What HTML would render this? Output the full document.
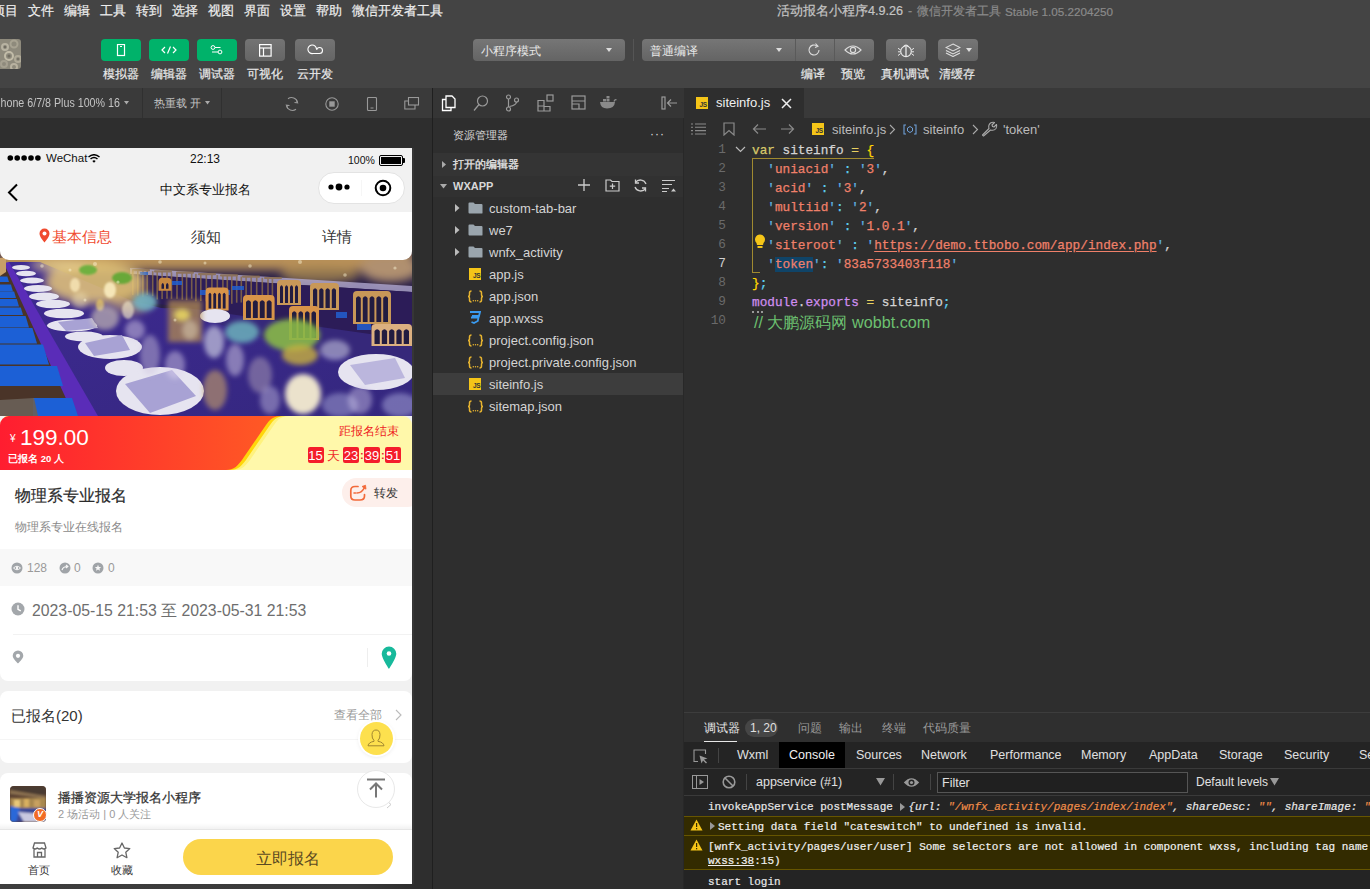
<!DOCTYPE html>
<html><head><meta charset="utf-8">
<style>
*{box-sizing:border-box;margin:0;padding:0}
html,body{width:1370px;height:889px;overflow:hidden}
body{position:relative;background:#444;font-family:"Liberation Sans",sans-serif;color:#ddd;font-size:13px}
.a{position:absolute}
.t{position:absolute;white-space:nowrap;line-height:1}
/* top */
#menu .t{top:5px;font-size:12.5px;color:#eeeeee;-webkit-text-stroke:0.2px currentColor}
.btn{position:absolute;top:39px;width:40px;height:22px;border-radius:4px;background:#00b26a}
.btn.g{background:linear-gradient(#747474,#656565)}
.lbl{position:absolute;top:67.5px;font-size:12px;color:#e8e8e8;-webkit-text-stroke:0.2px currentColor;white-space:nowrap;line-height:1}
.dd{position:absolute;top:39px;height:22px;border-radius:4px;background:linear-gradient(#767676,#646464)}
/* sim */
#simbar{left:0;top:88px;width:432px;height:30px;background:#3a3a3a}
#sim{left:0;top:118px;width:432px;height:771px;background:#2e2e2e}
#phone{left:0;top:148px;width:412px;height:736px;background:#f1f1f1;overflow:hidden}
#divL{left:432px;top:88px;width:1px;height:801px;background:#1f1f1f}
/* explorer */
#exp{left:433px;top:88px;width:251px;height:801px;background:#2e2e2e}
#expbar{left:0;top:0;width:251px;height:30px;background:#353535}
.row{position:absolute;left:0;width:250px;height:22px}
.row .t{top:5px;font-size:13px;color:#d0d0d0}
/* editor */
#ed{left:684px;top:88px;width:686px;height:624px;background:#2e2e2e}
#tabbar{left:0;top:0;width:686px;height:30px;background:#393939}
.code{position:absolute;left:68px;margin-top:0.5px;-webkit-text-stroke:0.25px currentColor;font-family:"Liberation Mono",monospace;font-size:12.73px;line-height:19px;white-space:pre;color:#d4d4d4}
.ln{position:absolute;width:42px;text-align:right;font-family:"Liberation Mono",monospace;font-size:12.73px;line-height:19px;color:#6e6e6e}
/* debug */
#dbg{left:684px;top:712px;width:686px;height:177px;background:#242424}
</style></head>
<body>
<div id="menu" class="a" style="left:0;top:0;width:1370px;height:22px"><div class="t" style="left:-8.3px">项目</div><div class="t" style="left:27.7px">文件</div><div class="t" style="left:63.8px">编辑</div><div class="t" style="left:100.4px">工具</div><div class="t" style="left:136px">转到</div><div class="t" style="left:172px">选择</div><div class="t" style="left:207.8px">视图</div><div class="t" style="left:244.3px">界面</div><div class="t" style="left:280px">设置</div><div class="t" style="left:316px">帮助</div><div class="t" style="left:352px">微信开发者工具</div><div class="t" style="left:777px;top:5px;font-size:12.6px;color:#c4c4c4">活动报名小程序4.9.26</div><div class="t" style="left:908px;top:5px;font-size:12.4px;color:#8a8a8a">-</div><div class="t" style="left:917px;top:5px;font-size:12.2px;color:#8a8a8a">微信开发者工具</div><div class="t" style="left:1005px;top:5.5px;font-size:11.7px;color:#8a8a8a">Stable 1.05.2204250</div></div>
<div class="a" style="left:0;top:39px;width:21px;height:30px;border-radius:0 3px 3px 0;overflow:hidden;background:#8e8a7c"><svg width="21" height="30"><defs><filter id="avb"><feGaussianBlur stdDeviation="0.7"/></filter></defs><g filter="url(#avb)" fill="none" stroke-width="2"><circle cx="5" cy="8" r="3" stroke="#b8b3a2"/><circle cx="14" cy="5" r="3.5" stroke="#a8a392"/><circle cx="9" cy="17" r="4" stroke="#c2bca8"/><circle cx="18" cy="20" r="3" stroke="#b0aa98"/><circle cx="4" cy="25" r="3" stroke="#a5a090"/><circle cx="14" cy="28" r="3" stroke="#b8b2a0"/></g><g fill="#5e5a50" opacity="0.6"><circle cx="5" cy="8" r="1.2"/><circle cx="9" cy="17" r="1.5"/><circle cx="18" cy="20" r="1"/></g></svg></div>
<div class="btn" style="left:101px"><svg class="a" style="left:14px;top:5px" width="12" height="13"><rect x="2.5" y="0.5" width="7" height="11" stroke="#fff" fill="none" stroke-width="1.2"/><line x1="5" y1="2.5" x2="7" y2="2.5" stroke="#fff" fill="none" stroke-width="1.2"/></svg></div>
<div class="btn" style="left:149px"><svg class="a" style="left:12px;top:6px" width="16" height="10"><path d="M4 2 L1 5 L4 8 M12 2 L15 5 L12 8 M9.5 1.5 L6.5 8.5" stroke="#fff" fill="none" stroke-width="1.2"/></svg></div>
<div class="btn" style="left:197px"><svg class="a" style="left:12px;top:5px" width="16" height="12"><circle cx="4" cy="3.5" r="1.9" stroke="#fff" fill="none" stroke-width="1"/><line x1="6" y1="3.5" x2="11.5" y2="3.5" stroke="#fff" stroke-width="1"/><circle cx="11" cy="8" r="1.9" stroke="#fff" fill="none" stroke-width="1"/><line x1="3" y1="8" x2="9" y2="8" stroke="#fff" stroke-width="1"/></svg></div>
<div class="btn g" style="left:245px"><svg class="a" style="left:14px;top:5px" width="13" height="13"><rect x="0.6" y="0.6" width="11.5" height="11.5" stroke="#fff" fill="none" stroke-width="1.2"/><line x1="0.6" y1="4" x2="12" y2="4" stroke="#fff" fill="none" stroke-width="1.2"/><line x1="4.5" y1="4" x2="4.5" y2="12" stroke="#fff" fill="none" stroke-width="1.2"/></svg></div>
<div class="btn g" style="left:295px"><svg class="a" style="left:12px;top:4px" width="17" height="14"><path d="M9.5 6.2 A4.3 4.3 0 1 0 6 10.5 L12.5 10.5 A3 3 0 0 0 12.5 4.5 A3 3 0 0 0 9.6 6.8" stroke="#fff" fill="none" stroke-width="1.1"/></svg></div>
<div class="lbl" style="left:103px">模拟器</div>
<div class="lbl" style="left:151px">编辑器</div>
<div class="lbl" style="left:199px">调试器</div>
<div class="lbl" style="left:247px">可视化</div>
<div class="lbl" style="left:297px">云开发</div>
<div class="dd" style="left:473px;width:152px"><div class="t" style="left:8px;top:6.5px;font-size:11.8px;color:#e8e8e8">小程序模式</div><svg class="a" style="left:133px;top:9px" width="6" height="4"><path d="M0 0 L6 0 L3 4Z" fill="#ddd"/></svg></div>
<div class="a" style="left:633px;top:39px;width:1px;height:22px;background:#555"></div>
<div class="dd" style="left:642px;width:232px"><div class="t" style="left:8px;top:6.5px;font-size:11.8px;color:#e8e8e8">普通编译</div><svg class="a" style="left:134px;top:9px" width="6" height="4"><path d="M0 0 L6 0 L3 4Z" fill="#ddd"/></svg>
<div class="a" style="left:153px;top:0;width:1px;height:22px;background:#5a5a5a"></div><div class="a" style="left:192px;top:0;width:1px;height:22px;background:#5a5a5a"></div>
<svg class="a" style="left:164px;top:3px" width="16" height="16"><path d="M13 8 A5 5 0 1 1 11 4" stroke="#ddd" fill="none" stroke-width="1.1"/><path d="M9.5 1.5 L12 4.2 L9 5.5" stroke="#ddd" fill="none" stroke-width="1.1"/></svg>
<svg class="a" style="left:202px;top:5px" width="18" height="12"><path d="M1 6 Q9 -2 17 6 Q9 14 1 6Z" stroke="#ddd" fill="none" stroke-width="1.1"/><circle cx="9" cy="6" r="2.6" stroke="#ddd" fill="none" stroke-width="1.1"/></svg></div>
<div class="dd" style="left:886px;width:40px"><svg class="a" style="left:11px;top:3px" width="18" height="16"><circle cx="9" cy="9.3" r="5.3" stroke="#e8e8e8" fill="none" stroke-width="1.1"/><path d="M6.3 4.8 Q9 1.5 11.7 4.8" stroke="#e8e8e8" fill="none" stroke-width="1.1"/><path d="M9 4.5 L9 14.6" stroke="#e8e8e8" stroke-width="1.3"/><path d="M3.7 8 L1 6.3 M14.3 8 L17 6.3 M3.7 11.5 L1 13.5 M14.3 11.5 L17 13.5 M3.7 9.8 L1 9.8 M14.3 9.8 L17 9.8" stroke="#e8e8e8" fill="none" stroke-width="1"/></svg></div>
<div class="dd" style="left:938px;width:40px"><svg class="a" style="left:7px;top:4px" width="16" height="14"><path d="M8 1 L15 4.5 L8 8 L1 4.5Z M1 7.5 L8 11 L15 7.5 M1 10 L8 13.5 L15 10" stroke="#ddd" fill="none" stroke-width="1.1"/></svg><svg class="a" style="left:28px;top:9px" width="6" height="4"><path d="M0 0 L6 0 L3 4Z" fill="#ddd"/></svg></div>
<div class="lbl" style="left:801px">编译</div>
<div class="lbl" style="left:841px">预览</div>
<div class="lbl" style="left:881px">真机调试</div>
<div class="lbl" style="left:939px">清缓存</div>

<div id="simbar" class="a">
<div class="t" style="left:-9.5px;top:9px;font-size:12px;color:#c4c4c4;transform:scaleX(0.89);transform-origin:0 0">iPhone 6/7/8 Plus 100% 16</div>
<svg class="a" style="left:124px;top:13px" width="5" height="4"><path d="M0 0 L5 0 L2.5 3.5Z" fill="#aaa"/></svg>
<div class="a" style="left:142px;top:0;width:1px;height:30px;background:#303030"></div>
<div class="t" style="left:154px;top:9.5px;font-size:11.3px;color:#c4c4c4">热重载 开</div>
<svg class="a" style="left:205px;top:13px" width="5" height="4"><path d="M0 0 L5 0 L2.5 3.5Z" fill="#aaa"/></svg>
<div class="a" style="left:221px;top:0;width:1px;height:30px;background:#303030"></div>
<svg class="a" style="left:284px;top:8px" width="16" height="16"><path d="M13.5 6.5 A6 6 0 0 0 4 2.8 M2.5 9.5 A6 6 0 0 0 12 13.2" stroke="#999" fill="none" stroke-width="1.1"/><path d="M12.2 3.5 L13.6 6.8 L10.5 6.5 M3.8 12.5 L2.4 9.2 L5.5 9.5" stroke="#999" fill="none" stroke-width="1.1"/></svg>
<svg class="a" style="left:325px;top:9px" width="14" height="14"><circle cx="7" cy="7" r="6.2" stroke="#999" fill="none" stroke-width="1.1"/><rect x="4.3" y="4.3" width="5.4" height="5.4" fill="#999"/></svg>
<svg class="a" style="left:366px;top:9px" width="12" height="15"><rect x="1.5" y="0.5" width="9" height="13" rx="1" stroke="#999" fill="none" stroke-width="1.1"/><line x1="4.5" y1="11" x2="7.5" y2="11" stroke="#999" stroke-width="1"/></svg>
<svg class="a" style="left:404px;top:9px" width="16" height="14"><rect x="4.5" y="0.5" width="10" height="7.5" stroke="#999" fill="none" stroke-width="1.1"/><path d="M4.5 4 L0.8 4 L0.8 12 L11 12 L11 8" stroke="#999" fill="none" stroke-width="1.1"/></svg>
</div>
<div id="sim" class="a">
</div>
<div id="phone" class="a">
<!-- status -->
<svg class="a" style="left:7px;top:6px" width="36" height="8"><g fill="#000"><circle cx="3.3" cy="4" r="2.8"/><circle cx="10.2" cy="4" r="2.8"/><circle cx="17.1" cy="4" r="2.8"/><circle cx="24" cy="4" r="2.8"/><circle cx="30.9" cy="4" r="2.8"/></g></svg>
<div class="t" style="left:46px;top:5px;font-size:11.5px;color:#111">WeChat</div>
<svg class="a" style="left:88px;top:6px" width="12" height="9"><path d="M0.5 3 Q6 -1.5 11.5 3" stroke="#000" fill="none" stroke-width="1.5"/><path d="M2.5 5 Q6 2 9.5 5" stroke="#000" fill="none" stroke-width="1.5"/><path d="M4.3 7 Q6 5.5 7.7 7 L6 8.8Z" fill="#000"/></svg>
<div class="t" style="left:190px;top:5px;font-size:12px;color:#111">22:13</div>
<div class="t" style="left:348px;top:7px;font-size:10.5px;color:#111">100%</div>
<div class="a" style="left:379px;top:7px;width:24px;height:11px;border:1.5px solid #000;border-radius:2px;padding:1px"><div style="width:100%;height:100%;background:#000"></div></div>
<div class="a" style="left:403px;top:10px;width:2px;height:5px;background:#000;border-radius:0 1px 1px 0"></div>
<!-- nav -->
<svg class="a" style="left:7px;top:35px" width="12" height="20"><path d="M10 1.5 L2 9.5 L10 17.5" stroke="#000" fill="none" stroke-width="2"/></svg>
<div class="t" style="left:160px;top:35px;font-size:13px;color:#111">中文系专业报名</div>
<div class="a" style="left:318px;top:24px;width:87px;height:32px;border-radius:16px;background:#fff;border:1px solid #e3e3e3"></div>
<svg class="a" style="left:327px;top:34px" width="26" height="10"><circle cx="4" cy="5" r="2.6" fill="#000"/><circle cx="12" cy="5" r="3.4" fill="#000"/><circle cx="20" cy="5" r="2.6" fill="#000"/></svg>
<div class="a" style="left:361px;top:32px;width:1px;height:16px;background:#f6f6f6"></div>
<svg class="a" style="left:374px;top:31px" width="18" height="18"><circle cx="9" cy="9" r="7.3" stroke="#000" fill="none" stroke-width="2"/><circle cx="9" cy="9" r="3.3" fill="#000"/></svg>
<!-- tabs -->
<div class="a" style="left:0;top:64px;width:412px;height:48px;background:#fff;border-radius:0 0 9px 9px;z-index:2"></div>
<svg class="a" style="left:39px;top:80px;z-index:3" width="11" height="15"><path d="M5.5 0.5 A5 5 0 0 1 10.5 5.5 C10.5 9 5.5 14.5 5.5 14.5 C5.5 14.5 0.5 9 0.5 5.5 A5 5 0 0 1 5.5 0.5Z" fill="#f04a2e"/><circle cx="5.5" cy="5.5" r="2" fill="#fff"/></svg>
<div class="t" style="left:52px;top:81.5px;font-size:14.5px;color:#f04a2e;z-index:3">基本信息</div>
<div class="t" style="left:191px;top:82px;font-size:14.5px;color:#333;z-index:3">须知</div>
<div class="t" style="left:322px;top:82px;font-size:14.5px;color:#333;z-index:3">详情</div>
<svg class="a" style="left:0;top:100px;z-index:1" width="412" height="168" viewBox="0 248 412 168">
<defs>
<linearGradient id="ptab" x1="0" y1="0" x2="1" y2="1"><stop offset="0" stop-color="#3e2a92"/><stop offset="1" stop-color="#34277e"/></linearGradient>
<filter id="bl" x="-10%" y="-10%" width="120%" height="120%"><feGaussianBlur stdDeviation="0.7"/></filter>
<filter id="bl1" x="-10%" y="-10%" width="120%" height="120%"><feGaussianBlur stdDeviation="1.1"/></filter>
<filter id="bl2" x="-30%" y="-30%" width="160%" height="160%"><feGaussianBlur stdDeviation="2.5"/></filter>
<filter id="bl3" x="-30%" y="-30%" width="160%" height="160%"><feGaussianBlur stdDeviation="5"/></filter>
</defs>
<rect x="0" y="248" width="412" height="168" fill="#36287a"/>
<!-- far background -->
<rect x="0" y="248" width="412" height="60" fill="#2a2048"/>
<g filter="url(#bl3)">
<rect x="0" y="248" width="412" height="22" fill="#b89058"/>
<ellipse cx="390" cy="268" rx="30" ry="14" fill="#b09070"/>
<ellipse cx="320" cy="275" rx="40" ry="8" fill="#a88850" opacity="0.8"/>
</g>
<!-- far table lavender edge -->
<path d="M130 268 L412 286 L412 292 L130 274Z" fill="#b8b0d8" opacity="0.75" filter="url(#bl)"/>
<path d="M130 274 L412 292 L412 340 L130 300Z" fill="#2c1c58"/>
<g filter="url(#bl)" fill="#8a6c48" opacity="0.8"><rect x="132.0" y="270.0" width="1.6" height="25.0"/><rect x="137.0" y="270.3" width="1.6" height="25.5"/><rect x="142.1" y="270.6" width="1.6" height="26.5"/><rect x="146.4" y="270.9" width="1.6" height="24.1"/><rect x="151.9" y="271.2" width="1.6" height="25.0"/><rect x="156.4" y="271.5" width="1.6" height="28.0"/><rect x="161.3" y="271.8" width="1.6" height="27.3"/><rect x="166.2" y="272.1" width="1.6" height="26.6"/><rect x="170.7" y="272.3" width="1.6" height="26.5"/><rect x="176.2" y="272.7" width="1.6" height="26.1"/><rect x="181.5" y="273.0" width="1.6" height="26.7"/><rect x="185.8" y="273.2" width="1.6" height="27.0"/><rect x="190.9" y="273.5" width="1.6" height="25.2"/><rect x="195.1" y="273.8" width="1.6" height="27.5"/><rect x="200.0" y="274.1" width="1.6" height="26.9"/><rect x="205.5" y="274.4" width="1.6" height="26.9"/><rect x="211.1" y="274.7" width="1.6" height="25.6"/><rect x="216.5" y="275.1" width="1.6" height="25.8"/><rect x="222.1" y="275.4" width="1.6" height="27.5"/><rect x="226.5" y="275.7" width="1.6" height="24.5"/><rect x="231.0" y="275.9" width="1.6" height="27.9"/><rect x="235.9" y="276.2" width="1.6" height="26.5"/><rect x="240.5" y="276.5" width="1.6" height="26.0"/><rect x="245.3" y="276.8" width="1.6" height="25.4"/><rect x="250.4" y="277.1" width="1.6" height="26.3"/><rect x="255.9" y="277.4" width="1.6" height="26.7"/><rect x="261.5" y="277.8" width="1.6" height="27.4"/><rect x="267.2" y="278.1" width="1.6" height="26.7"/><rect x="271.6" y="278.4" width="1.6" height="27.4"/><rect x="132" y="269.0" width="18" height="2.2" rx="1"/><rect x="154" y="270.3" width="18" height="2.2" rx="1"/><rect x="176" y="271.6" width="18" height="2.2" rx="1"/><rect x="198" y="273.0" width="18" height="2.2" rx="1"/><rect x="220" y="274.3" width="18" height="2.2" rx="1"/><rect x="242" y="275.6" width="18" height="2.2" rx="1"/><rect x="264" y="276.9" width="18" height="2.2" rx="1"/></g>
<g fill="#2060d0" opacity="0.85" filter="url(#bl)"><rect x="140" y="272" width="8" height="3"/><rect x="172" y="281" width="10" height="4"/><rect x="200" y="290" width="30" height="5"/><rect x="336" y="312" width="11" height="6"/><rect x="357" y="323" width="14" height="7"/><rect x="232" y="286" width="12" height="4"/></g>
<g filter="url(#bl)"><path d="M277 305 L277 284 Q277 280 281 280 L297 280 Q301 280 301 284 L301 305Z" fill="#c89858"/><path d="M280.0 303 L280.0 287 Q281.5 283.5 283.0 287 L283.0 303Z" fill="#231a40"/><path d="M285.0 303 L285.0 287 Q286.5 283.5 288.0 287 L288.0 303Z" fill="#231a40"/><path d="M290.0 303 L290.0 287 Q291.5 283.5 293.0 287 L293.0 303Z" fill="#231a40"/><path d="M295.0 303 L295.0 287 Q296.5 283.5 298.0 287 L298.0 303Z" fill="#231a40"/><path d="M310 310 L310 287 Q310 283 314 283 L335 283 Q339 283 339 287 L339 310Z" fill="#c89858"/><path d="M313.0 308 L313.0 290 Q315.1 286.5 317.2 290 L317.2 308Z" fill="#231a40"/><path d="M319.2 308 L319.2 290 Q321.4 286.5 323.5 290 L323.5 308Z" fill="#231a40"/><path d="M325.5 308 L325.5 290 Q327.6 286.5 329.8 290 L329.8 308Z" fill="#231a40"/><path d="M331.8 308 L331.8 290 Q333.9 286.5 336.0 290 L336.0 308Z" fill="#231a40"/><path d="M353 324 L353 295 Q353 291 357 291 L387 291 Q391 291 391 295 L391 324Z" fill="#c89858"/><path d="M356.0 322 L356.0 298 Q358.4 294.5 360.8 298 L360.8 322Z" fill="#231a40"/><path d="M362.8 322 L362.8 298 Q365.2 294.5 367.6 298 L367.6 322Z" fill="#231a40"/><path d="M369.6 322 L369.6 298 Q372.0 294.5 374.4 298 L374.4 322Z" fill="#231a40"/><path d="M376.4 322 L376.4 298 Q378.8 294.5 381.2 298 L381.2 322Z" fill="#231a40"/><path d="M383.2 322 L383.2 298 Q385.6 294.5 388.0 298 L388.0 322Z" fill="#231a40"/><path d="M205.6 310.6 L205.6 291.6 Q205.6 287.6 209.6 287.6 L224.6 287.6 Q228.6 287.6 228.6 291.6 L228.6 310.6Z" fill="#d89448"/><path d="M208.6 308.6 L208.6 294.6 Q210.0 291.1 211.3 294.6 L211.3 308.6Z" fill="#231a40"/><path d="M213.3 308.6 L213.3 294.6 Q214.7 291.1 216.1 294.6 L216.1 308.6Z" fill="#231a40"/><path d="M218.1 308.6 L218.1 294.6 Q219.5 291.1 220.8 294.6 L220.8 308.6Z" fill="#231a40"/><path d="M222.8 308.6 L222.8 294.6 Q224.2 291.1 225.6 294.6 L225.6 308.6Z" fill="#231a40"/><path d="M243 320 L243 299 Q243 295 247 295 L270.6 295 Q274.6 295 274.6 299 L274.6 320Z" fill="#d89448"/><path d="M246.0 318 L246.0 302 Q248.4 298.5 250.9 302 L250.9 318Z" fill="#231a40"/><path d="M252.9 318 L252.9 302 Q255.3 298.5 257.8 302 L257.8 318Z" fill="#231a40"/><path d="M259.8 318 L259.8 302 Q262.2 298.5 264.7 302 L264.7 318Z" fill="#231a40"/><path d="M266.7 318 L266.7 302 Q269.1 298.5 271.6 302 L271.6 318Z" fill="#231a40"/><path d="M158.5 290.7 L158.5 281.7 Q158.5 277.7 162.5 277.7 L167.5 277.7 Q171.5 277.7 171.5 281.7 L171.5 290.7Z" fill="#c88840"/><path d="M161.5 288.7 L161.5 284.7 Q162.8 281.2 164.0 284.7 L164.0 288.7Z" fill="#231a40"/><path d="M166.0 288.7 L166.0 284.7 Q167.2 281.2 168.5 284.7 L168.5 288.7Z" fill="#231a40"/><path d="M289 340 L289 310 Q289 306 293 306 L315 306 Q319 306 319 310 L319 340Z" fill="#d89448"/><path d="M292.0 338 L292.0 313 Q294.2 309.5 296.5 313 L296.5 338Z" fill="#231a40"/><path d="M298.5 338 L298.5 313 Q300.8 309.5 303.0 313 L303.0 338Z" fill="#231a40"/><path d="M305.0 338 L305.0 313 Q307.2 309.5 309.5 313 L309.5 338Z" fill="#231a40"/><path d="M311.5 338 L311.5 313 Q313.8 309.5 316.0 313 L316.0 338Z" fill="#231a40"/><path d="M371.5 346 L371.5 328 Q371.5 324 375.5 324 L408.0 324 Q412.0 324 412.0 328 L412.0 346Z" fill="#dcb080"/><path d="M374.5 344 L374.5 331 Q377.1 327.5 379.8 331 L379.8 344Z" fill="#231a40"/><path d="M381.8 344 L381.8 331 Q384.4 327.5 387.1 331 L387.1 344Z" fill="#231a40"/><path d="M389.1 344 L389.1 331 Q391.8 327.5 394.4 331 L394.4 344Z" fill="#231a40"/><path d="M396.4 344 L396.4 331 Q399.0 327.5 401.7 331 L401.7 344Z" fill="#231a40"/><path d="M403.7 344 L403.7 331 Q406.3 327.5 409.0 331 L409.0 344Z" fill="#231a40"/></g>
<!-- tablecloth top surface -->
<path d="M8 262 L40 262 L130 300 L200 318 L300 350 L412 364 L412 416 L98 416Z" fill="url(#ptab)"/>
<!-- left golden glow region -->
<g filter="url(#bl3)">
<ellipse cx="95" cy="282" rx="50" ry="22" fill="#e8c878" opacity="0.85"/>
<ellipse cx="130" cy="300" rx="20" ry="14" fill="#d8b870" opacity="0.6"/>
<ellipse cx="60" cy="265" rx="30" ry="6" fill="#e8d090" opacity="0.8"/>
</g>
<g filter="url(#bl1)">
<ellipse cx="88" cy="270" rx="9" ry="5" fill="#70b040"/>
<ellipse cx="122" cy="278" rx="10" ry="6" fill="#68a838"/>
<ellipse cx="110" cy="290" rx="6" ry="8" fill="#fff4c8" opacity="0.8"/>
<ellipse cx="75" cy="285" rx="5" ry="7" fill="#fff0c0" opacity="0.7"/>
<ellipse cx="128" cy="310" rx="6" ry="9" fill="#f8f0d0" opacity="0.6"/>
<ellipse cx="100" cy="305" rx="4" ry="6" fill="#e8c860" opacity="0.7"/>
</g>
<!-- skirt -->
<path d="M0 264 L9 262 L98 416 L74 416 Z" fill="#5a2cb8"/>
<!-- blue chairs left -->
<path d="M0 272 L6 268 L74 416 L0 416Z" fill="#4a3428"/>
<path d="M0 258 L6 258 L6 272 L0 276Z" fill="#c8a068"/>
<g fill="#1c60d6" filter="url(#bl)"><path d="M-2 276.5 L7.3 276.5 L9.0 282 L-2 282Z"/><path d="M-2 284.5 L10.9 284.5 L13.0 291.5 L-2 291.5Z"/><path d="M-2 291.5 L14.1 291.5 L16.0 298 L-2 298Z"/><path d="M-2 299 L16.8 299 L19.0 306.5 L-2 306.5Z"/><path d="M-2 307.5 L20.8 307.5 L23.0 315 L-2 315Z"/><path d="M-2 316 L25.6 316 L29.0 327.5 L-2 327.5Z"/><path d="M-2 328 L32.4 328 L37.0 343.5 L-2 343.5Z"/><path d="M-2 344.5 L43.0 344.5 L49.0 364.5 L-2 364.5Z"/><path d="M-2 366 L57.0 366 L63.0 386 L-2 386Z"/><path d="M33 398 L72 398 L78 416 L33 416Z"/></g>
<path d="M0 400 L34 398 L38 416 L0 416Z" fill="#6a6058" opacity="0.9"/>
<!-- plates -->
<g filter="url(#bl)">
<g fill="#e6e4f0"><ellipse cx="21" cy="267.5" rx="9" ry="2.5"/><ellipse cx="26" cy="273.5" rx="10" ry="2.8"/><ellipse cx="32" cy="280.5" rx="12" ry="3"/><ellipse cx="38" cy="288.5" rx="14" ry="3.5"/><ellipse cx="44" cy="296.5" rx="15" ry="4"/><ellipse cx="53" cy="304" rx="17" ry="4.2"/><ellipse cx="64" cy="313.5" rx="20" ry="4.8"/><ellipse cx="72" cy="325.5" rx="25" ry="6"/><ellipse cx="84" cy="336.5" rx="19" ry="5"/><ellipse cx="110" cy="347" rx="32" ry="12"/><ellipse cx="124" cy="368" rx="19" ry="8"/><ellipse cx="160" cy="391" rx="44" ry="24"/><ellipse cx="215" cy="316" rx="15" ry="7"/><ellipse cx="376" cy="372" rx="38" ry="18"/></g>
<g fill="#a8a2d4">
<path d="M85 343 L122 335 L130 350 L94 356Z"/><path d="M125 384 L172 370 L196 396 L150 413Z"/>
<path d="M58 322 L92 318 L98 328 L66 331Z"/><path d="M350 365 L395 358 L405 378 L365 385Z" opacity="0.7"/>
</g>
</g>
<!-- decorations -->
<g filter="url(#bl2)">
<ellipse cx="145" cy="302" rx="12" ry="9" fill="#70b0c0" opacity="0.9"/>
<rect x="168" y="300" width="34" height="42" fill="#b89050" opacity="0.7"/>
<ellipse cx="182" cy="315" rx="8" ry="6" fill="#f0e060" opacity="0.8"/>
<ellipse cx="242" cy="332" rx="17" ry="11" fill="#68a8b8" opacity="0.9"/>
<ellipse cx="292" cy="335" rx="28" ry="16" fill="#88b848" opacity="0.9"/>
<ellipse cx="300" cy="355" rx="18" ry="10" fill="#c8b040" opacity="0.8"/>
<ellipse cx="214" cy="342" rx="10" ry="16" fill="#c8c8e0" opacity="0.7"/>
<ellipse cx="303" cy="394" rx="18" ry="20" fill="#f4ecd0" opacity="0.95"/>
<ellipse cx="260" cy="375" rx="12" ry="18" fill="#b0a0b8" opacity="0.5"/>
<ellipse cx="215" cy="390" rx="12" ry="20" fill="#c8a068" opacity="0.6"/>
<ellipse cx="340" cy="405" rx="18" ry="12" fill="#a8a8d8" opacity="0.5"/>
<ellipse cx="400" cy="405" rx="18" ry="12" fill="#b0b0e0" opacity="0.5"/>
<ellipse cx="150" cy="355" rx="10" ry="20" fill="#d0c8e0" opacity="0.45"/>
<ellipse cx="335" cy="350" rx="15" ry="10" fill="#d0d0e8" opacity="0.55"/>
</g>
<g filter="url(#bl2)">
<ellipse cx="175" cy="365" rx="10" ry="14" fill="#e0d8f0" opacity="0.45"/>
<ellipse cx="235" cy="360" rx="9" ry="16" fill="#d8d0e8" opacity="0.5"/>
<ellipse cx="270" cy="400" rx="10" ry="14" fill="#c8c0e0" opacity="0.45"/>
<ellipse cx="190" cy="330" rx="8" ry="10" fill="#e8e0c0" opacity="0.45"/>
<ellipse cx="360" cy="400" rx="12" ry="14" fill="#d0c8e8" opacity="0.45"/>
</g>
<g filter="url(#bl2)">
<ellipse cx="105" cy="318" rx="14" ry="12" fill="#e8dcc0" opacity="0.55"/>
<ellipse cx="135" cy="330" rx="10" ry="10" fill="#d8cce8" opacity="0.5"/>
<ellipse cx="80" cy="300" rx="8" ry="8" fill="#f0e0b0" opacity="0.5"/>
</g>
<g fill="#fff8d8" filter="url(#bl)" opacity="0.45">
<circle cx="42" cy="266" r="1.8"/><circle cx="70" cy="270" r="1.5"/><circle cx="95" cy="264" r="2"/><circle cx="118" cy="282" r="1.6"/>
<circle cx="160" cy="262" r="1.8"/><circle cx="205" cy="263" r="1.5"/><circle cx="250" cy="266" r="1.8"/><circle cx="300" cy="262" r="2"/>
<circle cx="345" cy="275" r="1.8"/><circle cx="395" cy="268" r="1.6"/><circle cx="85" cy="300" r="1.5"/><circle cx="175" cy="320" r="1.5"/>
</g>
</svg>
<!-- price -->
<div class="a" style="left:0;top:268px;width:412px;height:54px;border-radius:9px 9px 0 0;overflow:hidden;background:#fff8aa">
 <svg class="a" style="left:0;top:0" width="412" height="54"><defs><linearGradient id="rg" x1="0" x2="1"><stop offset="0" stop-color="#ff1d30"/><stop offset="1" stop-color="#ff5c24"/></linearGradient></defs>
 <path d="M0 0 L282 0 C274 0 270 3 266 9 L244 41 C238 50 234 54 226 54 L0 54Z" fill="#fff27e" transform="translate(8,0)"/>
 <path d="M0 0 L282 0 C274 0 270 3 266 9 L244 41 C238 50 234 54 226 54 L0 54Z" fill="#ffd60a" transform="translate(4,0)"/>
 <path d="M0 0 L282 0 C274 0 270 3 266 9 L244 41 C238 50 234 54 226 54 L0 54Z" fill="url(#rg)"/></svg>
 <div class="t" style="left:10px;top:18px;font-size:10px;color:#fff">¥</div>
 <div class="t" style="left:20px;top:11px;font-size:22.5px;color:#fff">199.00</div>
 <div class="t" style="left:8px;top:38px;font-size:9.5px;color:#fff;font-weight:700">已报名 20 人</div>
 <div class="t" style="left:339px;top:9px;font-size:12px;color:#ee1c22">距报名结束</div>
 <div class="a" style="left:307.5px;top:31px;width:16px;height:15.5px;background:#f41d2b;border-radius:2px;color:#fff;font-size:13px;line-height:17px;text-align:center">15</div>
 <div class="t" style="left:327px;top:33px;font-size:13px;color:#ee2a2a">天</div>
 <div class="a" style="left:343px;top:31px;width:16px;height:15.5px;background:#f41d2b;border-radius:2px;color:#fff;font-size:13px;line-height:17px;text-align:center">23</div>
 <div class="t" style="left:360px;top:34px;font-size:11px;color:#e8232e;font-weight:700">:</div>
 <div class="a" style="left:364px;top:31px;width:16px;height:15.5px;background:#f41d2b;border-radius:2px;color:#fff;font-size:13px;line-height:17px;text-align:center">39</div>
 <div class="t" style="left:381px;top:34px;font-size:11px;color:#e8232e;font-weight:700">:</div>
 <div class="a" style="left:385px;top:31px;width:16px;height:15.5px;background:#f41d2b;border-radius:2px;color:#fff;font-size:13px;line-height:17px;text-align:center">51</div>
</div>
<!-- info -->
<div class="a" style="left:0;top:322px;width:412px;height:79px;background:#fff"></div>
<div class="t" style="left:15px;top:339px;font-size:16.3px;color:#2a2a2a;-webkit-text-stroke:0.2px #2a2a2a">物理系专业报名</div>
<div class="a" style="left:342px;top:330px;width:80px;height:29px;border-radius:15px;background:#fdefeb"></div>
<svg class="a" style="left:349px;top:335.5px" width="20" height="18"><path d="M9 2.5 L6 2.5 Q1.8 2.5 1.8 6.5 L1.8 12 Q1.8 16 6 16 L11 16 Q15.5 16 15.5 12 L15.5 10.5" stroke="#f26a3a" fill="none" stroke-width="1.7" stroke-linecap="round"/><path d="M5 9 L6.5 9 M8 9 Q13 9 15.5 3.5" stroke="#f26a3a" fill="none" stroke-width="1.6" stroke-linecap="round"/><path d="M13 2.5 L16.5 1.2 L17 5.2Z" fill="#f26a3a" stroke="#f26a3a" stroke-width="0.8" stroke-linejoin="round"/></svg>
<div class="t" style="left:374px;top:339px;font-size:12px;color:#333">转发</div>
<div class="t" style="left:15px;top:372.5px;font-size:12.2px;color:#8a8a8a">物理系专业在线报名</div>
<!-- stats -->
<div class="a" style="left:0;top:401px;width:412px;height:37px;background:#f8f8f8"></div>
<svg class="a" style="left:11px;top:414px" width="12" height="12"><circle cx="6" cy="6" r="5.5" fill="#a0a4a8"/><path d="M2.5 6 Q6 2.5 9.5 6 Q6 9.5 2.5 6Z" stroke="#f8f8f8" fill="none" stroke-width="1"/><circle cx="6" cy="6" r="1.2" fill="#f8f8f8"/></svg>
<div class="t" style="left:27px;top:414px;font-size:12px;color:#9a9a9a">128</div>
<svg class="a" style="left:59px;top:414px" width="12" height="12"><circle cx="6" cy="6" r="5.5" fill="#a0a4a8"/><path d="M3 8 Q4 4.5 8.5 4.5 M7 3 L8.8 4.5 L7 6" stroke="#f8f8f8" fill="none" stroke-width="1.2"/></svg>
<div class="t" style="left:74px;top:414px;font-size:12px;color:#9a9a9a">0</div>
<svg class="a" style="left:92px;top:414px" width="12" height="12"><circle cx="6" cy="6" r="5.5" fill="#a0a4a8"/><path d="M6 2.8 L6.9 5 L9.2 5.1 L7.4 6.5 L8 8.8 L6 7.5 L4 8.8 L4.6 6.5 L2.8 5.1 L5.1 5Z" fill="#f8f8f8"/></svg>
<div class="t" style="left:108px;top:414px;font-size:12px;color:#9a9a9a">0</div>
<!-- card1 -->
<div class="a" style="left:0;top:438px;width:412px;height:95px;background:#fff;border-radius:0 0 8px 8px"></div>
<svg class="a" style="left:11px;top:453.5px" width="14" height="14"><circle cx="7" cy="7" r="6.5" fill="#a3a7ab"/><path d="M7 3.2 L7 7.3 L9.8 8.8" stroke="#fff" fill="none" stroke-width="1.4"/></svg>
<div class="t" style="left:32px;top:455px;font-size:15.8px;color:#6e6e6e">2023-05-15 21:53 至 2023-05-31 21:53</div>
<div class="a" style="left:13px;top:486px;width:399px;height:1px;background:#f2f2f2"></div>
<svg class="a" style="left:12px;top:502px" width="12" height="14"><path d="M6 0.5 A5.3 5.3 0 0 1 11.3 5.8 C11.3 9 6 13.5 6 13.5 C6 13.5 0.7 9 0.7 5.8 A5.3 5.3 0 0 1 6 0.5Z" fill="#a3a7ab"/><circle cx="6" cy="5.8" r="2.1" fill="#fff"/></svg>
<div class="a" style="left:367px;top:500px;width:1px;height:19px;background:#eee"></div>
<svg class="a" style="left:381px;top:498px" width="16" height="24"><path d="M8 0.5 A7.3 7.3 0 0 1 15.3 7.8 C15.3 12 8 23 8 23 C8 23 0.7 12 0.7 7.8 A7.3 7.3 0 0 1 8 0.5Z" fill="#17b99b"/><circle cx="8" cy="7.5" r="2.3" fill="#fff"/></svg>
<!-- card2 -->
<div class="a" style="left:0;top:543px;width:412px;height:72px;background:#fff;border-radius:8px"></div>
<div class="t" style="left:11px;top:560px;font-size:15px;color:#333">已报名(20)</div>
<div class="t" style="left:334px;top:560.5px;font-size:12px;color:#999">查看全部</div>
<svg class="a" style="left:395px;top:561px" width="7" height="12"><path d="M1 1 L6 6 L1 11" stroke="#bbb" fill="none" stroke-width="1.1"/></svg>
<div class="a" style="left:0;top:591px;width:412px;height:1px;background:#f5f5f5"></div>
<!-- card3 -->
<div class="a" style="left:0;top:625px;width:412px;height:70px;background:#fff;border-radius:8px"></div>
<div class="a" style="left:10px;top:638px;width:36px;height:36px;border-radius:4px;overflow:hidden;background:#5a4030"><svg width="36" height="36"><defs><filter id="thb"><feGaussianBlur stdDeviation="0.8"/></filter></defs><g filter="url(#thb)"><rect x="0" y="0" width="36" height="9" fill="#4a3a30"/><path d="M0 4 L36 10 L36 13 L0 8Z" fill="#8a7050"/><rect x="0" y="12" width="36" height="11" fill="#a88850"/><rect x="4" y="14" width="6" height="7" fill="#e8c878"/><rect x="14" y="13" width="5" height="8" fill="#d8b060"/><rect x="24" y="14" width="6" height="7" fill="#c8a060"/><path d="M0 22 L36 22 L36 36 L0 36Z" fill="#3a4a98"/><path d="M0 20 L10 22 L6 36 L0 36Z" fill="#2a68d8"/><path d="M8 26 L30 28 L36 36 L14 36Z" fill="#c8c8e0"/></g></svg></div>
<div class="a" style="left:33px;top:660px;width:14px;height:14px;border-radius:7px;background:#f26b25;border:1.5px solid #fff"></div>
<div class="t" style="left:37px;top:662px;font-size:9px;color:#fff;font-style:italic;font-weight:700">V</div>
<div class="t" style="left:58px;top:643px;font-size:13px;color:#333;-webkit-text-stroke:0.25px #333">播播资源大学报名小程序</div>
<div class="t" style="left:58px;top:661px;font-size:11px;color:#9a9a9a">2 场活动 | 0 人关注</div>
<svg class="a" style="left:386px;top:652px" width="6" height="9"><path d="M1 1 L5 4.5 L1 8" stroke="#ccc" fill="none" stroke-width="1"/></svg>
<!-- floating -->
<div class="a" style="left:359.5px;top:573.5px;width:33px;height:33px;border-radius:17px;background:#fde04e;box-shadow:0 0 0 2px #fff,0 1px 5px rgba(0,0,0,0.15)"></div>
<svg class="a" style="left:366px;top:580px" width="20" height="20"><path d="M8 12.5 Q5.8 10.5 6 6.5 Q6.3 2 10 2 Q13.7 2 14 6.5 Q14.2 10.5 12 12.5 L12 13.3 Q17.5 14.3 18 17.8 L2 17.8 Q2.5 14.3 8 13.3Z" stroke="#a08530" fill="none" stroke-width="1" stroke-linejoin="round"/></svg>
<div class="a" style="left:357px;top:622px;width:38px;height:38px;border-radius:19px;background:#fff;border:1px solid #e8e8e8"></div>
<svg class="a" style="left:366px;top:630px" width="20" height="20"><path d="M1 1.5 L19 1.5" stroke="#777" stroke-width="2"/><path d="M10 19.5 L10 6 M4 11.5 L10 5.5 L16 11.5" stroke="#777" fill="none" stroke-width="2"/></svg>
<!-- tabbar -->
<div class="a" style="left:0;top:675px;width:412px;height:6px;background:linear-gradient(to bottom,rgba(0,0,0,0),rgba(0,0,0,0.05))"></div><div class="a" style="left:0;top:681px;width:412px;height:55px;background:#fff;border-top:1px solid #e6e6e6"></div>
<svg class="a" style="left:31px;top:694px" width="17" height="16"><path d="M2 6 L3.5 1 L13.5 1 L15 6 Q13 8 10.8 6 Q8.5 8 6.2 6 Q4 8 2 6Z M3 7.5 L3 15 L14 15 L14 7.5 M6.5 15 L6.5 10.5 L10.5 10.5 L10.5 15" stroke="#666" fill="none" stroke-width="1.3"/></svg>
<div class="t" style="left:28px;top:717px;font-size:11px;color:#333">首页</div>
<svg class="a" style="left:113px;top:694px" width="18" height="17"><path d="M9 1 L11.4 6 L16.8 6.6 L12.8 10.3 L13.9 15.7 L9 13 L4.1 15.7 L5.2 10.3 L1.2 6.6 L6.6 6Z" stroke="#666" fill="none" stroke-width="1.3" stroke-linejoin="round"/></svg>
<div class="t" style="left:111px;top:717px;font-size:11px;color:#333">收藏</div>
<div class="a" style="left:183px;top:691px;width:210px;height:36px;border-radius:18px;background:#fbd54b"></div>
<div class="t" style="left:256px;top:702.5px;font-size:16px;color:#5b4a22">立即报名</div>
</div>
<div class="a" style="left:0;top:884px;width:416px;height:5px;background:linear-gradient(to right,#3e3e3e,#3a3a3a 85%,#2e2e2e)"></div><div class="a" style="left:412px;top:148px;width:2px;height:736px;background:#363636"></div>
<div id="divL" class="a"></div>
<div id="exp" class="a"><div id="expbar" class="a">
<svg class="a" style="left:8px;top:7px" width="16" height="17"><path d="M5 4.5 L1.5 4.5 L1.5 15.5 L10 15.5 L10 12.5" stroke="#fff" fill="none" stroke-width="1.3"/><path d="M5 1 L11 1 L14 4 L14 12.5 L5 12.5Z" stroke="#fff" fill="none" stroke-width="1.3"/></svg>
<svg class="a" style="left:40px;top:7px" width="16" height="17"><circle cx="9.5" cy="6" r="5" stroke="#9a9a9a" fill="none" stroke-width="1.2"/><path d="M6 9.5 L1 15.5" stroke="#9a9a9a" fill="none" stroke-width="1.2"/></svg>
<svg class="a" style="left:72px;top:6px" width="15" height="18"><circle cx="3.5" cy="3" r="2" stroke="#9a9a9a" fill="none" stroke-width="1.2"/><circle cx="3.5" cy="15" r="2" stroke="#9a9a9a" fill="none" stroke-width="1.2"/><circle cx="11.5" cy="6" r="2" stroke="#9a9a9a" fill="none" stroke-width="1.2"/><path d="M3.5 5 L3.5 13 M11.5 8 Q11.5 11 4.5 12.5" stroke="#9a9a9a" fill="none" stroke-width="1.2"/></svg>
<svg class="a" style="left:103.5px;top:6px" width="18" height="18"><path d="M1 6.5 L7 6.5 L7 12.5 L13 12.5 L13 17 L1 17Z M1 12 L7 12 M7 12.5 L7 17" stroke="#9a9a9a" fill="none" stroke-width="1.2"/><rect x="10" y="1" width="6" height="6" stroke="#9a9a9a" fill="none" stroke-width="1.2"/></svg>
<svg class="a" style="left:137.5px;top:7px" width="16" height="16"><rect x="1" y="1" width="13" height="13" stroke="#9a9a9a" fill="none" stroke-width="1.2"/><path d="M1 6 L14 6 M1 9 L8 9 L8 14" stroke="#9a9a9a" fill="none" stroke-width="1.2"/></svg>
<svg class="a" style="left:166px;top:8px" width="18" height="13"><path d="M1 6 L16 6 Q15.5 12.5 8 12.5 Q1.5 12.5 1 6Z" fill="#8a8a8a"/><rect x="4" y="3" width="3" height="2.5" fill="#8a8a8a"/><rect x="7.5" y="3" width="3" height="2.5" fill="#8a8a8a"/><rect x="7.5" y="0" width="3" height="2.5" fill="#8a8a8a"/><path d="M15 5.5 Q16 3 17.5 4" stroke="#8a8a8a" fill="none" stroke-width="1.3"/></svg>
<svg class="a" style="left:228px;top:8px" width="17" height="14"><rect x="1" y="1" width="3" height="12" stroke="#9a9a9a" fill="none" stroke-width="1.2"/><path d="M16 7 L7 7 M10 3.5 L6.5 7 L10 10.5" stroke="#9a9a9a" fill="none" stroke-width="1.2"/></svg>
</div>
<div class="t" style="left:20px;top:42px;font-size:11px;color:#d8d8d8">资源管理器</div>
<div class="t" style="left:217px;top:40px;font-size:12px;color:#ddd;letter-spacing:1px">···</div>
<div class="a" style="left:0;top:65px;width:251px;height:23px;background:#343434"></div>
<svg class="a" style="left:9px;top:73px" width="5" height="7"><path d="M0 0 L4 3.5 L0 7Z" fill="#aaa"/></svg>
<div class="t" style="left:20px;top:71px;font-size:11px;color:#d8d8d8;font-weight:700">打开的编辑器</div>
<div class="a" style="left:0;top:88px;width:251px;height:21px;background:#313131"></div>
<svg class="a" style="left:7px;top:96px" width="7" height="5"><path d="M0 0 L7 0 L3.5 4.5Z" fill="#aaa"/></svg>
<div class="t" style="left:20px;top:93px;font-size:11px;color:#d8d8d8;font-weight:700">WXAPP</div>
<svg class="a" style="left:144px;top:90px" width="14" height="14"><path d="M7 1 L7 13 M1 7 L13 7" stroke="#ccc" stroke-width="1.3"/></svg>
<svg class="a" style="left:172px;top:90px" width="15" height="14"><path d="M1 2 L5.5 2 L7 3.5 L14 3.5 L14 13 L1 13Z" stroke="#ccc" fill="none" stroke-width="1.2"/><path d="M7.5 5.5 L7.5 11 M4.8 8.2 L10.2 8.2" stroke="#ccc" stroke-width="1.2"/></svg>
<svg class="a" style="left:200px;top:90px" width="15" height="15"><path d="M13 6 A6 6 0 0 0 2.5 4.5 M2 9 A6 6 0 0 0 12.5 10.5" stroke="#ccc" fill="none" stroke-width="1.3"/><path d="M2.5 1.5 L2.5 5 L6 5 M12.5 13.5 L12.5 10 L9 10" stroke="#ccc" fill="none" stroke-width="1.3"/></svg>
<svg class="a" style="left:228px;top:91px" width="15" height="13"><path d="M1 1.5 L14 1.5 M1 5.5 L11 5.5 M1 9.5 L8 9.5 M1 12.5 L6 12.5" stroke="#ccc" stroke-width="1.2"/><path d="M10 12.5 L12.5 9.5 L15 12.5Z" fill="#ccc"/></svg>
<div class="row" style="top:109px;"><svg class="a" style="left:22px;top:7px" width="5" height="8"><path d="M0 0 L4.5 4 L0 8Z" fill="#bbb"/></svg><svg class="a" style="left:35px;top:5px" width="15" height="12"><path d="M0.5 1.5 Q0.5 0.5 1.5 0.5 L5.5 0.5 L7 2 L13.5 2 Q14.5 2 14.5 3 L14.5 11 Q14.5 11.5 13.5 11.5 L1.5 11.5 Q0.5 11.5 0.5 10.5Z" fill="#9aa5ad"/></svg><div class="t" style="left:56px;top:5px;font-size:13px;color:#d4d4d4">custom-tab-bar</div></div><div class="row" style="top:131px;"><svg class="a" style="left:22px;top:7px" width="5" height="8"><path d="M0 0 L4.5 4 L0 8Z" fill="#bbb"/></svg><svg class="a" style="left:35px;top:5px" width="15" height="12"><path d="M0.5 1.5 Q0.5 0.5 1.5 0.5 L5.5 0.5 L7 2 L13.5 2 Q14.5 2 14.5 3 L14.5 11 Q14.5 11.5 13.5 11.5 L1.5 11.5 Q0.5 11.5 0.5 10.5Z" fill="#9aa5ad"/></svg><div class="t" style="left:56px;top:5px;font-size:13px;color:#d4d4d4">we7</div></div><div class="row" style="top:153px;"><svg class="a" style="left:22px;top:7px" width="5" height="8"><path d="M0 0 L4.5 4 L0 8Z" fill="#bbb"/></svg><svg class="a" style="left:35px;top:5px" width="15" height="12"><path d="M0.5 1.5 Q0.5 0.5 1.5 0.5 L5.5 0.5 L7 2 L13.5 2 Q14.5 2 14.5 3 L14.5 11 Q14.5 11.5 13.5 11.5 L1.5 11.5 Q0.5 11.5 0.5 10.5Z" fill="#9aa5ad"/></svg><div class="t" style="left:56px;top:5px;font-size:13px;color:#d4d4d4">wnfx_activity</div></div><div class="row" style="top:175px;"><div class="a" style="left:36px;top:5px;width:12px;height:12px;background:#f5c518"><div class="t" style="left:4px;top:5px;font-size:6.5px;color:#333;font-weight:700;letter-spacing:-0.3px">JS</div></div><div class="t" style="left:56px;top:5px;font-size:13px;color:#d4d4d4">app.js</div></div><div class="row" style="top:197px;"><svg class="a" style="left:33.5px;top:5px" width="17" height="13"><path d="M4.5 1 Q2.5 1 2.5 3 L2.5 5 Q2.5 6.5 1 6.5 Q2.5 6.5 2.5 8 L2.5 10 Q2.5 12 4.5 12 M12.5 1 Q14.5 1 14.5 3 L14.5 5 Q14.5 6.5 16 6.5 Q14.5 6.5 14.5 8 L14.5 10 Q14.5 12 12.5 12" stroke="#e8b530" fill="none" stroke-width="1.5"/><circle cx="6.3" cy="10.8" r="0.75" fill="#e8b530"/><circle cx="8.5" cy="10.8" r="0.75" fill="#e8b530"/><circle cx="10.7" cy="10.8" r="0.75" fill="#e8b530"/></svg><div class="t" style="left:56px;top:5px;font-size:13px;color:#d4d4d4">app.json</div></div><div class="row" style="top:219px;"><svg class="a" style="left:36px;top:4px" width="12" height="13"><path d="M1 1 L11 1 L10 5 L3 5 M2 6.5 L9.5 6.5 L8.8 10 L5 12 L2.5 11" stroke="#3a9bf0" fill="none" stroke-width="1.8"/></svg><div class="t" style="left:56px;top:5px;font-size:13px;color:#d4d4d4">app.wxss</div></div><div class="row" style="top:241px;"><svg class="a" style="left:33.5px;top:5px" width="17" height="13"><path d="M4.5 1 Q2.5 1 2.5 3 L2.5 5 Q2.5 6.5 1 6.5 Q2.5 6.5 2.5 8 L2.5 10 Q2.5 12 4.5 12 M12.5 1 Q14.5 1 14.5 3 L14.5 5 Q14.5 6.5 16 6.5 Q14.5 6.5 14.5 8 L14.5 10 Q14.5 12 12.5 12" stroke="#e8b530" fill="none" stroke-width="1.5"/><circle cx="6.3" cy="10.8" r="0.75" fill="#e8b530"/><circle cx="8.5" cy="10.8" r="0.75" fill="#e8b530"/><circle cx="10.7" cy="10.8" r="0.75" fill="#e8b530"/></svg><div class="t" style="left:56px;top:5px;font-size:13px;color:#d4d4d4">project.config.json</div></div><div class="row" style="top:263px;"><svg class="a" style="left:33.5px;top:5px" width="17" height="13"><path d="M4.5 1 Q2.5 1 2.5 3 L2.5 5 Q2.5 6.5 1 6.5 Q2.5 6.5 2.5 8 L2.5 10 Q2.5 12 4.5 12 M12.5 1 Q14.5 1 14.5 3 L14.5 5 Q14.5 6.5 16 6.5 Q14.5 6.5 14.5 8 L14.5 10 Q14.5 12 12.5 12" stroke="#e8b530" fill="none" stroke-width="1.5"/><circle cx="6.3" cy="10.8" r="0.75" fill="#e8b530"/><circle cx="8.5" cy="10.8" r="0.75" fill="#e8b530"/><circle cx="10.7" cy="10.8" r="0.75" fill="#e8b530"/></svg><div class="t" style="left:56px;top:5px;font-size:13px;color:#d4d4d4">project.private.config.json</div></div><div class="row" style="top:285px; background:#3d3d3d;"><div class="a" style="left:36px;top:5px;width:12px;height:12px;background:#f5c518"><div class="t" style="left:4px;top:5px;font-size:6.5px;color:#333;font-weight:700;letter-spacing:-0.3px">JS</div></div><div class="t" style="left:56px;top:5px;font-size:13px;color:#d4d4d4">siteinfo.js</div></div><div class="row" style="top:307px;"><svg class="a" style="left:33.5px;top:5px" width="17" height="13"><path d="M4.5 1 Q2.5 1 2.5 3 L2.5 5 Q2.5 6.5 1 6.5 Q2.5 6.5 2.5 8 L2.5 10 Q2.5 12 4.5 12 M12.5 1 Q14.5 1 14.5 3 L14.5 5 Q14.5 6.5 16 6.5 Q14.5 6.5 14.5 8 L14.5 10 Q14.5 12 12.5 12" stroke="#e8b530" fill="none" stroke-width="1.5"/><circle cx="6.3" cy="10.8" r="0.75" fill="#e8b530"/><circle cx="8.5" cy="10.8" r="0.75" fill="#e8b530"/><circle cx="10.7" cy="10.8" r="0.75" fill="#e8b530"/></svg><div class="t" style="left:56px;top:5px;font-size:13px;color:#d4d4d4">sitemap.json</div></div></div>
<div id="ed" class="a"><div id="tabbar" class="a">
<div class="a" style="left:0;top:0;width:120px;height:30px;background:#2e2e2e"></div>
<div class="a" style="left:12px;top:9px;width:12px;height:12px;background:#f5c518"><div class="t" style="left:3.5px;top:5px;font-size:6.5px;color:#333;font-weight:700;letter-spacing:-0.3px">JS</div></div>
<div class="t" style="left:32px;top:8px;font-size:13px;color:#f0f0f0">siteinfo.js</div>
<svg class="a" style="left:97px;top:10px" width="11" height="11"><path d="M1 1 L10 10 M10 1 L1 10" stroke="#eee" stroke-width="1.5"/></svg>
</div>
<svg class="a" style="left:7px;top:35px" width="16" height="12"><path d="M0 1 L2 1 M4 1 L15 1 M0 4.3 L2 4.3 M4 4.3 L15 4.3 M0 7.6 L2 7.6 M4 7.6 L15 7.6 M0 11 L2 11 M4 11 L15 11" stroke="#8a8a8a" stroke-width="1.1"/></svg>
<svg class="a" style="left:39px;top:34px" width="12" height="14"><path d="M1 1 L11 1 L11 13 L6 8.5 L1 13Z" stroke="#8a8a8a" fill="none" stroke-width="1.2"/></svg>
<svg class="a" style="left:68px;top:35px" width="15" height="12"><path d="M14 6 L1.5 6 M6 1.5 L1.5 6 L6 10.5" stroke="#8a8a8a" fill="none" stroke-width="1.2"/></svg>
<svg class="a" style="left:96px;top:35px" width="15" height="12"><path d="M1 6 L13.5 6 M9 1.5 L13.5 6 L9 10.5" stroke="#8a8a8a" fill="none" stroke-width="1.2"/></svg>
<div class="a" style="left:128px;top:35px;width:12px;height:12px;background:#f5c518"><div class="t" style="left:3.5px;top:5px;font-size:6.5px;color:#333;font-weight:700;letter-spacing:-0.3px">JS</div></div>
<div class="t" style="left:148px;top:35px;font-size:13px;color:#bbb">siteinfo.js</div>
<svg class="a" style="left:205px;top:36px" width="7" height="11"><path d="M1 1 L5.5 5.5 L1 10" stroke="#aaa" fill="none" stroke-width="1.1"/></svg>
<svg class="a" style="left:219px;top:36px" width="14" height="11"><path d="M3 1 L1 1 L1 10 L3 10 M11 1 L13 1 L13 10 L11 10" stroke="#6fa0d8" fill="none" stroke-width="1.1"/><path d="M4.5 4 L7 2.5 L9.5 4 L9.5 7 L7 8.5 L4.5 7Z" stroke="#6fa0d8" fill="none" stroke-width="1"/></svg>
<div class="t" style="left:239px;top:35px;font-size:13px;color:#bbb">siteinfo</div>
<svg class="a" style="left:288px;top:36px" width="7" height="11"><path d="M1 1 L5.5 5.5 L1 10" stroke="#aaa" fill="none" stroke-width="1.1"/></svg>
<svg class="a" style="left:297px;top:33px" width="17" height="17"><path d="M2.5 15 L1.5 14 L8 7.5 Q7 4 9.5 2 Q11.5 0.8 13.5 1.5 L11 4 L11.5 5.5 L13 6 L15.5 3.5 Q16.2 5.5 15 7.5 Q13 10 9.5 9 Z" stroke="#aaa" fill="none" stroke-width="1.1" stroke-linejoin="round"/></svg>
<div class="t" style="left:319px;top:35px;font-size:13px;color:#bbb">'token'</div>
<div class="ln" style="left:0;top:52px;color:#6a6a6a">1</div><div class="ln" style="left:0;top:71px;color:#6a6a6a">2</div><div class="ln" style="left:0;top:90px;color:#6a6a6a">3</div><div class="ln" style="left:0;top:109px;color:#6a6a6a">4</div><div class="ln" style="left:0;top:128px;color:#6a6a6a">5</div><div class="ln" style="left:0;top:147px;color:#6a6a6a">6</div><div class="ln" style="left:0;top:166px;color:#d0d0d0">7</div><div class="ln" style="left:0;top:185px;color:#6a6a6a">8</div><div class="ln" style="left:0;top:204px;color:#6a6a6a">9</div><div class="ln" style="left:0;top:223px;color:#6a6a6a">10</div><svg class="a" style="left:51px;top:58px" width="11" height="7"><path d="M1 1 L5.5 5.5 L10 1" stroke="#bbb" fill="none" stroke-width="1.2"/></svg><div class="a" style="left:68px;top:70px;width:122px;height:115px;border-left:1px solid #a08a30;border-top:1px solid #a08a30"></div><div class="a" style="left:68px;top:184px;width:8px;height:1px;background:#a08a30"></div><div class="code" style="top:52px"><span style="color:#d7c96a">var</span> <span style="color:#d4d4d4">siteinfo</span> <span style="color:#e8d060">=</span> <span style="color:#ffd700">{</span></div><div class="code" style="top:71px">  <span style="color:#5fb0e0">'</span><span style="color:#f0806a">uniacid</span><span style="color:#5fb0e0">'</span> <span style="color:#5fd0f0">:</span> <span style="color:#5fb0e0">'</span><span style="color:#f0806a">3</span><span style="color:#5fb0e0">'</span>,</div><div class="code" style="top:90px">  <span style="color:#5fb0e0">'</span><span style="color:#f0806a">acid</span><span style="color:#5fb0e0">'</span> <span style="color:#5fd0f0">:</span> <span style="color:#5fb0e0">'</span><span style="color:#f0806a">3</span><span style="color:#5fb0e0">'</span>,</div><div class="code" style="top:109px">  <span style="color:#5fb0e0">'</span><span style="color:#f0806a">multiid</span><span style="color:#5fb0e0">'</span><span style="color:#5fd0f0">:</span> <span style="color:#5fb0e0">'</span><span style="color:#f0806a">2</span><span style="color:#5fb0e0">'</span>,</div><div class="code" style="top:128px">  <span style="color:#5fb0e0">'</span><span style="color:#f0806a">version</span><span style="color:#5fb0e0">'</span> <span style="color:#5fd0f0">:</span> <span style="color:#5fb0e0">'</span><span style="color:#f0806a">1.0.1</span><span style="color:#5fb0e0">'</span>,</div><div class="code" style="top:147px">  <span style="color:#5fb0e0">'</span><span style="color:#f0806a">siteroot</span><span style="color:#5fb0e0">'</span> <span style="color:#5fd0f0">:</span> <span style="color:#5fb0e0">'</span><span style="color:#f0806a;text-decoration:underline;text-underline-offset:2px">https://demo.ttbobo.com/app/index.php</span><span style="color:#5fb0e0">'</span>,</div><div class="code" style="top:166px">  <span style="color:#5fb0e0">'</span><span style="color:#f0806a;background:#0f4468">token</span><span style="color:#5fb0e0">'</span><span style="color:#5fd0f0">:</span> <span style="color:#5fb0e0">'</span><span style="color:#f0806a">83a5733403f118</span><span style="color:#5fb0e0">'</span></div><div class="code" style="top:185px"><span style="color:#ffd700">}</span><span style="color:#5fd0f0">;</span></div><div class="code" style="top:204px"><span style="color:#d08ef0">module</span>.<span style="color:#d08ef0">exports</span> <span style="color:#e8d060">=</span> siteinfo<span style="color:#5fd0f0">;</span></div><div class="code" style="top:223px"></div><div class="t" style="left:70px;top:225.5px;font-size:16.2px;color:#6cc070">// 大鹏源码网 wobbt.com</div><svg class="a" style="left:70px;top:146px" width="12" height="15"><path d="M6 0.5 A5 5 0 0 1 9.5 9 L9 11 L3 11 L2.5 9 A5 5 0 0 1 6 0.5Z" fill="#f5c518"/><rect x="3.5" y="12" width="5" height="2" fill="#f5c518"/></svg><div class="a" style="left:68px;top:223px;width:11px;height:2px;border-top:2px dotted #999"></div></div>
<div class="a" style="left:683px;top:118px;width:1px;height:771px;background:#282828;z-index:5"></div>
<div id="dbg" class="a">
<div class="a" style="left:0;top:0;width:686px;height:30px;background:#2f2f2f;border-top:1px solid #3d3d3d"></div>
<div class="t" style="left:20px;top:11px;font-size:11.5px;color:#e8e8e8">调试器</div>
<div class="a" style="left:20px;top:28.5px;width:33px;height:1.5px;background:#e8e8e8"></div>
<div class="a" style="left:61px;top:7px;width:33px;height:18px;border-radius:9px;background:#464646"></div>
<div class="t" style="left:66px;top:10px;font-size:12px;color:#e0e0e0">1, 20</div>
<div class="t" style="left:114px;top:11px;font-size:11.5px;color:#9a9a9a">问题</div>
<div class="t" style="left:155px;top:11px;font-size:11.5px;color:#9a9a9a">输出</div>
<div class="t" style="left:198px;top:11px;font-size:11.5px;color:#9a9a9a">终端</div>
<div class="t" style="left:239px;top:11px;font-size:11.5px;color:#9a9a9a">代码质量</div>
<div class="a" style="left:0;top:30px;width:686px;height:27px;background:#242424;border-bottom:1px solid #3a3a3a"></div>
<svg class="a" style="left:9px;top:37px" width="16" height="15"><path d="M5 12.5 L1 12.5 L1 1 L12.5 1 L12.5 5" stroke="#999" fill="none" stroke-width="1.1"/><path d="M6.5 6.5 L14.5 9.5 L11 10.5 L14 13.5 L13 14.5 L10 11.5 L8.5 14.5Z" fill="#999"/></svg>
<div class="a" style="left:34px;top:36px;width:1px;height:15px;background:#444"></div>
<div class="t" style="left:53px;top:37px;font-size:12.5px;color:#e0e0e0">Wxml</div>
<div class="a" style="left:95px;top:30px;width:66px;height:26px;background:#000"></div>
<div class="t" style="left:105px;top:37px;font-size:12.5px;color:#f0f0f0">Console</div>
<div class="t" style="left:172px;top:37px;font-size:12.5px;color:#e0e0e0">Sources</div>
<div class="t" style="left:237px;top:37px;font-size:12.5px;color:#e0e0e0">Network</div>
<div class="t" style="left:306px;top:37px;font-size:12.5px;color:#e0e0e0">Performance</div>
<div class="t" style="left:397px;top:37px;font-size:12.5px;color:#e0e0e0">Memory</div>
<div class="t" style="left:465px;top:37px;font-size:12.5px;color:#e0e0e0">AppData</div>
<div class="t" style="left:535px;top:37px;font-size:12.5px;color:#e0e0e0">Storage</div>
<div class="t" style="left:600px;top:37px;font-size:12.5px;color:#e0e0e0">Security</div>
<div class="t" style="left:675px;top:37px;font-size:12.5px;color:#e0e0e0">Sensors</div>
<div class="a" style="left:0;top:57px;width:686px;height:27px;background:#242424;border-bottom:1px solid #3a3a3a"></div>
<svg class="a" style="left:8px;top:63px" width="16" height="15"><rect x="0.5" y="0.5" width="15" height="13" stroke="#999" fill="none" stroke-width="1"/><path d="M4.5 0.5 L4.5 13.5" stroke="#999" stroke-width="1"/><path d="M7.5 4 L12 7 L7.5 10Z" fill="#999"/></svg>
<svg class="a" style="left:38px;top:63px" width="14" height="14"><circle cx="7" cy="7" r="5.8" stroke="#999" fill="none" stroke-width="1.6"/><path d="M3 3 L11 11" stroke="#999" stroke-width="1.6"/></svg>
<div class="a" style="left:62px;top:62px;width:1px;height:16px;background:#444"></div>
<div class="t" style="left:72px;top:64px;font-size:12.5px;color:#e0e0e0">appservice (#1)</div>
<svg class="a" style="left:192px;top:66px" width="9" height="8"><path d="M0 0 L9 0 L4.5 7.5Z" fill="#999"/></svg>
<div class="a" style="left:209px;top:62px;width:1px;height:16px;background:#444"></div>
<svg class="a" style="left:219px;top:65px" width="17" height="11"><path d="M0.8 5.5 Q8.5 -3 16.2 5.5 Q8.5 14 0.8 5.5Z" fill="#999"/><circle cx="8.5" cy="5.5" r="3" fill="#242424"/><circle cx="8.5" cy="5.5" r="1.6" fill="#999"/></svg>
<div class="a" style="left:246px;top:62px;width:1px;height:16px;background:#444"></div>
<div class="a" style="left:253px;top:60px;width:251px;height:21px;border:1px solid #555;background:#202020"></div>
<div class="t" style="left:258px;top:65px;font-size:12.5px;color:#e0e0e0">Filter</div>
<div class="t" style="left:512px;top:64px;font-size:12px;color:#e0e0e0">Default levels</div>
<svg class="a" style="left:586px;top:66px" width="9" height="8"><path d="M0 0 L9 0 L4.5 7.5Z" fill="#999"/></svg>
<!-- console rows -->
<div class="t" style="left:24px;top:90px;font-family:Liberation Mono,monospace;font-size:11px;color:#e8e8e8;-webkit-text-stroke:0.2px currentColor">invokeAppService postMessage <span style="display:inline-block;width:0;height:0;border-left:5px solid #999;border-top:4px solid transparent;border-bottom:4px solid transparent;margin:0 3px 0 1px;vertical-align:-1px"></span><span style="font-style:italic">{url: <span style="color:#f08d49">"/wnfx_activity/pages/index/index"</span>, shareDesc: <span style="color:#f08d49">""</span>, shareImage: <span style="color:#f08d49">"</span></span></div>
<div class="a" style="left:0;top:104px;width:686px;height:20px;background:#332b00;border-top:1px solid #665500;border-bottom:1px solid #665500"></div>
<svg class="a" style="left:6px;top:107px" width="13" height="12"><path d="M6.5 0.5 L12.5 11.5 L0.5 11.5Z" fill="#f5c518"/><rect x="6" y="4" width="1.2" height="4" fill="#332b00"/><rect x="6" y="9" width="1.2" height="1.3" fill="#332b00"/></svg>
<svg class="a" style="left:26px;top:110px" width="6" height="8"><path d="M0 0 L5 4 L0 8Z" fill="#999"/></svg>
<div class="t" style="left:34px;top:110px;font-family:Liberation Mono,monospace;font-size:11px;color:#f0f0f0;-webkit-text-stroke:0.2px currentColor">Setting data field "cateswitch" to undefined is invalid.</div>
<div class="a" style="left:0;top:124px;width:686px;height:34px;background:#332b00;border-bottom:1px solid #665500"></div>
<svg class="a" style="left:6px;top:127px" width="13" height="12"><path d="M6.5 0.5 L12.5 11.5 L0.5 11.5Z" fill="#f5c518"/><rect x="6" y="4" width="1.2" height="4" fill="#332b00"/><rect x="6" y="9" width="1.2" height="1.3" fill="#332b00"/></svg>
<div class="t" style="left:24px;top:130px;font-family:Liberation Mono,monospace;font-size:11px;color:#f0f0f0;-webkit-text-stroke:0.2px currentColor">[wnfx_activity/pages/user/user] Some selectors are not allowed in component wxss, including tag name</div>
<div class="t" style="left:24px;top:144px;font-family:Liberation Mono,monospace;font-size:11px;color:#f0f0f0;-webkit-text-stroke:0.2px currentColor"><span style="text-decoration:underline">wxss:38</span>:15)</div>
<div class="t" style="left:24px;top:164.5px;font-family:Liberation Mono,monospace;font-size:11px;color:#e8e8e8;-webkit-text-stroke:0.2px currentColor">start login</div>
</div>
</body></html>
